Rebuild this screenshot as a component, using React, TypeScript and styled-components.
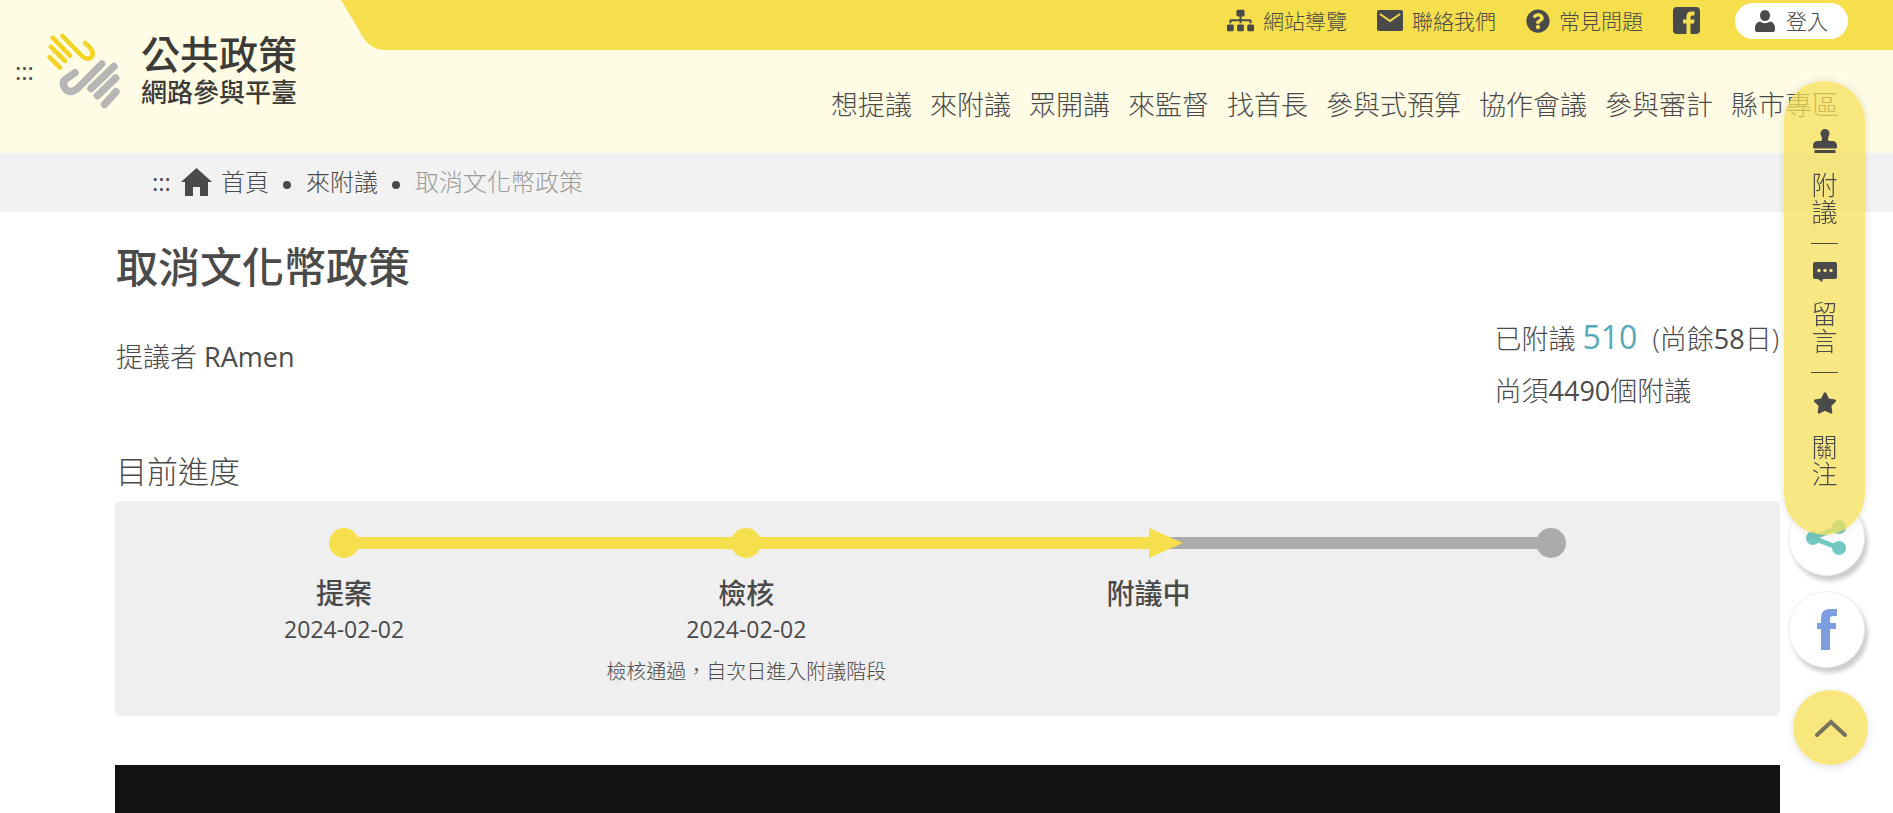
import React from "react";
import styled, { createGlobalStyle } from "styled-components";
import { FaQuestionCircle, FaSitemap, FaStamp, FaStar } from "react-icons/fa";

const GlobalStyle = createGlobalStyle`
  *, *::before, *::after { box-sizing: border-box; }
  body {
    margin: 0;
    background: #ffffff;
    color: #4a4a4a;
    font-family: "Open Sans", "Noto Sans CJK TC", sans-serif;
    font-weight: 300;
  }
  a { color: inherit; text-decoration: none; }
  h1, h2, p, ul, ol { margin: 0; padding: 0; list-style: none; }
`;

const Page = styled.div`
  display: flex;
  flex-direction: column;
  min-height: 100vh;
`;

const Header = styled.header`
  display: flex;
  height: 153px;
  background: #fffce6;
`;

const Brand = styled.div`
  display: flex;
  align-items: flex-start;
  flex: none;
  width: 341px;
  padding: 32px 0 0 15px;
`;

const AccessKey = styled.a`
  flex: none;
  font-size: 24px;
  line-height: 32px;
  font-weight: 400;
`;

const BrandKey = styled(AccessKey)`
  margin: 23px 13px 0 0;
`;

const BrandLink = styled.a`
  display: flex;
  gap: 20px;
  color: #3c3b37;
`;

const BrandText = styled.span`
  display: flex;
  flex-direction: column;
  padding-top: 1px;
  font-family: "Liberation Sans", "Noto Sans CJK TC", sans-serif;
  font-weight: 500;
`;

const BrandMain = styled.span`
  font-size: 39px;
  line-height: 45px;
`;

const BrandSub = styled.span`
  font-size: 26px;
  line-height: 30px;
`;

const HeaderMain = styled.div`
  display: flex;
  flex-direction: column;
  flex: 1;
  min-width: 0;
`;

const TopBar = styled.div`
  display: flex;
  height: 50px;
`;

const Wedge = styled.svg`
  flex: none;
  width: 44px;
  height: 50px;
`;

const TopLinks = styled.nav`
  display: flex;
  flex: 1;
  align-items: flex-start;
  justify-content: flex-end;
  padding: 3px 45px 0 0;
  background: #f5df4d;
`;

const TopLink = styled.a`
  display: flex;
  align-items: center;
  gap: 9px;
  height: 35px;
  margin-right: 30px;
  font-size: 21px;
  line-height: 34px;
  white-space: nowrap;
`;

const LoginButton = styled.button`
  display: flex;
  align-items: center;
  justify-content: center;
  gap: 11px;
  width: 113px;
  height: 36px;
  margin-left: 5px;
  padding: 0;
  border: 0;
  border-radius: 18px;
  background: #ffffff;
  color: inherit;
  font: inherit;
  font-size: 21px;
  line-height: 36px;
`;

const MainNav = styled.nav`
  display: flex;
  justify-content: flex-end;
  gap: 18px;
  padding: 35px 54px 0 0;
  font-size: 27px;
  line-height: 40px;
  white-space: nowrap;
`;

const Breadcrumb = styled.nav`
  display: flex;
  align-items: center;
  height: 59px;
  padding: 0 0 2px 152px;
  background: #f2f2f2;
  font-size: 24px;
  line-height: 36px;
`;

const HomeIcon = styled.svg`
  margin: 0 9px 0 10px;
`;

const Bullet = styled.span`
  width: 8px;
  height: 8px;
  margin: 6px 15px 0 14px;
  border-radius: 50%;
  background: #4a4a4a;
`;

const Current = styled.span`
  color: #9b9b9b;
`;

const Main = styled.main`
  display: flex;
  flex-direction: column;
  flex: 1;
  padding: 0 113px 0 115px;
`;

const Title = styled.h1`
  padding: 27px 0 0 1px;
  font-size: 42px;
  line-height: 56px;
  font-weight: 500;
`;

const Meta = styled.div`
  display: flex;
  align-items: flex-start;
  justify-content: space-between;
  padding: 16px 1px 0;
  font-size: 27px;
  line-height: 52px;
`;

const Proposer = styled.p`
  padding-top: 20px;
`;

const Count = styled.strong`
  margin: 0 8px 0 0;
  color: #56a9b8;
  font-size: 32px;
  font-weight: 400;
`;

const Latin = styled.span`
  font-weight: 400;
`;

const SectionTitle = styled.h2`
  padding: 31px 0 0 1px;
  font-size: 31px;
  line-height: 46px;
  font-weight: 300;
`;

const Progress = styled.ol`
  display: grid;
  grid-template-columns: repeat(4, 1fr);
  min-height: 215px;
  margin-top: 7px;
  padding: 27px 28px;
  border-radius: 6px;
  background: #efefef;
  text-align: center;
`;

const Step = styled.li`
  min-width: 0;
`;

const Track = styled.div`
  display: grid;
  grid-template-columns: 1fr 1fr;
  align-items: center;
  height: 30px;
`;

const Line = styled.span<{ $side: 1 | 2; $tone: string }>`
  grid-area: 1 / ${(p) => p.$side};
  height: 12px;
  background: ${(p) => p.$tone};
`;

const Dot = styled.span<{ $tone: string }>`
  grid-area: 1 / 1 / 2 / 3;
  justify-self: center;
  width: 30px;
  height: 30px;
  border-radius: 50%;
  background: ${(p) => p.$tone};
`;

const Arrow = styled.svg`
  grid-area: 1 / 2;
  width: 34px;
  height: 30px;
`;

const StepName = styled.p`
  padding-top: 16px;
  font-size: 28px;
  line-height: 39px;
  font-weight: 500;
`;

const StepDate = styled.p`
  font-size: 23px;
  line-height: 32px;
  font-weight: 400;
`;

const StepNote = styled.p`
  padding-top: 11px;
  font-size: 20px;
  line-height: 32px;
`;

const Media = styled.section`
  flex: 1;
  min-height: 48px;
  margin-top: 49px;
  background: #121212;
`;

const ActionPill = styled.aside`
  position: fixed;
  top: 81px;
  right: 28px;
  z-index: 2;
  display: flex;
  flex-direction: column;
  align-items: center;
  width: 81px;
  padding: 48px 0 30px;
  border-radius: 41px;
  background: rgba(245, 224, 90, 0.75);
  box-shadow: 0 0 8px rgba(0, 0, 0, 0.12);
`;

const Action = styled.button`
  display: flex;
  flex-direction: column;
  align-items: center;
  gap: 19px;
  width: 27px;
  padding: 0 0 17px;
  border: 0;
  background: none;
  color: inherit;
  font: inherit;
  font-size: 26px;
  line-height: 27px;

  & + & {
    padding-top: 18px;
    border-top: 1px solid #4a4a4a;
  }
`;

const ActionLabel = styled.span`
  width: 27px;
  word-break: break-all;
`;

const ShareStack = styled.div`
  position: fixed;
  right: 28px;
  bottom: 145px;
  z-index: 1;
  display: flex;
  flex-direction: column;
  gap: 15px;
`;

const Round = styled.a`
  display: flex;
  align-items: center;
  justify-content: center;
  width: 77px;
  height: 77px;
  border: 1px solid #ececec;
  border-radius: 50%;
  background: #ffffff;
  box-shadow: 3px 5px 4px rgba(0, 0, 0, 0.2);
`;

const TopButton = styled.button`
  position: fixed;
  right: 25px;
  bottom: 48px;
  display: flex;
  align-items: center;
  justify-content: center;
  width: 75px;
  height: 75px;
  padding: 0;
  border: 0;
  border-radius: 50%;
  background: #f8e77c;
  box-shadow: 0 2px 8px rgba(0, 0, 0, 0.12);
`;

const YELLOW = "#f5df4d";
const GREY = "#ababab";

const NAV = ["想提議", "來附議", "眾開講", "來監督", "找首長", "參與式預算", "協作會議", "參與審計", "縣市專區"];

const Logo = () => (
  <svg width="74" height="78" viewBox="47 32 74 78" fill="none" strokeLinecap="round" aria-hidden="true">
    <g stroke="#f3d324" strokeWidth="4.600">
      <path d="M62.500 36 L81 55 Q87 61 91.500 57 Q96 52 85 43" />
      <path d="M52.700 37.700 L70 55.700" />
      <path d="M50.700 46.700 L65 61" />
      <path d="M49.600 57.300 L60 67.700" />
    </g>
    <g stroke="#b7b5b6" strokeWidth="7.400">
      <path d="M101.700 64 L79 87 Q71 95 65.500 89 Q61 83 66 79 L75 72.700" />
      <path d="M114 66.500 L91 88.500" />
      <path d="M115.700 78 L97.500 95.700" />
      <path d="M116 91.700 L104.500 104.500" />
    </g>
  </svg>
);

const MailIcon = () => (
  <svg width="26" height="21" viewBox="0 0 26 21" aria-hidden="true">
    <rect width="26" height="21" rx="2" fill="#4a4a4a" />
    <path d="M3 4 L13 11 L23 4" fill="none" stroke={YELLOW} strokeWidth="2" />
  </svg>
);

const FacebookSquare = () => (
  <svg width="27" height="27" viewBox="0 0 27 27" aria-hidden="true">
    <rect width="27" height="27" rx="4" fill="#4a4a4a" />
    <path d="M13.500 27 V16.500 H10 V12.500 H13.500 V9.500 Q13.500 4.500 18.500 4.500 H21.500 V8.500 H19.500 Q17.500 8.500 17.500 10.500 V12.500 H21.500 L21 16.500 H17.500 V27 Z" fill={YELLOW} />
  </svg>
);

const UserIcon = () => (
  <svg width="20" height="22" viewBox="0 0 20 22" fill="#4a4a4a" aria-hidden="true">
    <ellipse cx="10" cy="5.500" rx="5" ry="5.500" />
    <path d="M5 11.500 Q10 15 15 11.500 Q20 12.500 20 18 V20 Q20 22 18 22 H2 Q0 22 0 20 V18 Q0 12.500 5 11.500 Z" />
  </svg>
);

const CommentIcon = () => (
  <svg width="24" height="20" viewBox="0 0 24 20" aria-hidden="true">
    <path d="M2 0 H22 Q24 0 24 2 V15 Q24 17 22 17 H10 L9 20 L5 17 H2 Q0 17 0 15 V2 Q0 0 2 0 Z" fill="#4a4a4a" />
    <g fill="#f7e688">
      <circle cx="6" cy="8.500" r="1.700" />
      <circle cx="12" cy="8.500" r="1.700" />
      <circle cx="18" cy="8.500" r="1.700" />
    </g>
  </svg>
);

export default function App() {
  return (
    <>
      <GlobalStyle />
      <Page>
        <Header>
          <Brand>
            <BrandKey href="#top">:::</BrandKey>
            <BrandLink href="#home">
              <Logo />
              <BrandText>
                <BrandMain>公共政策</BrandMain>
                <BrandSub>網路參與平臺</BrandSub>
              </BrandText>
            </BrandLink>
          </Brand>
          <HeaderMain>
            <TopBar>
              <Wedge viewBox="0 0 44 50" aria-hidden="true">
                <path d="M0 0 H44 V50 Q27 50 18 30 Z" fill={YELLOW} />
              </Wedge>
              <TopLinks>
                <TopLink href="#sitemap"><FaSitemap size={27} />網站導覽</TopLink>
                <TopLink href="#contact"><MailIcon />聯絡我們</TopLink>
                <TopLink href="#faq"><FaQuestionCircle size={24} />常見問題</TopLink>
                <TopLink href="#facebook" aria-label="Facebook"><FacebookSquare /></TopLink>
                <LoginButton type="button"><UserIcon />登入</LoginButton>
              </TopLinks>
            </TopBar>
            <MainNav>
              {NAV.map((label) => <a key={label} href="#nav">{label}</a>)}
            </MainNav>
          </HeaderMain>
        </Header>

        <Breadcrumb>
          <AccessKey href="#content">:::</AccessKey>
          <HomeIcon width="31" height="28" viewBox="0 0 31 28" aria-hidden="true">
            <path d="M15.500 0 L31 14 H27 V28 H19 V19 H12 V28 H4 V14 H0 Z" fill="#4a4a4a" />
          </HomeIcon>
          <a href="#home">首頁</a>
          <Bullet />
          <a href="#endorse">來附議</a>
          <Bullet />
          <Current>取消文化幣政策</Current>
        </Breadcrumb>

        <Main>
          <Title>取消文化幣政策</Title>
          <Meta>
            <Proposer>提議者 <Latin>RAmen</Latin></Proposer>
            <div>
              <p>已附議 <Count>510</Count> (尚餘<Latin>58</Latin>日)</p>
              <p>尚須<Latin>4490</Latin>個附議</p>
            </div>
          </Meta>
          <SectionTitle>目前進度</SectionTitle>
          <Progress>
            <Step>
              <Track><Line $side={2} $tone={YELLOW} /><Dot $tone={YELLOW} /></Track>
              <StepName>提案</StepName>
              <StepDate>2024-02-02</StepDate>
            </Step>
            <Step>
              <Track><Line $side={1} $tone={YELLOW} /><Line $side={2} $tone={YELLOW} /><Dot $tone={YELLOW} /></Track>
              <StepName>檢核</StepName>
              <StepDate>2024-02-02</StepDate>
              <StepNote>檢核通過，自次日進入附議階段</StepNote>
            </Step>
            <Step>
              <Track>
                <Line $side={1} $tone={YELLOW} />
                <Line $side={2} $tone={GREY} />
                <Arrow viewBox="0 0 34 30" aria-hidden="true"><path d="M0 0 L34 15 L0 30 Z" fill={YELLOW} /></Arrow>
              </Track>
              <StepName>附議中</StepName>
            </Step>
            <Step>
              <Track><Line $side={1} $tone={GREY} /><Dot $tone={GREY} /></Track>
            </Step>
          </Progress>
          <Media />
        </Main>
      </Page>

      <ActionPill>
        <Action type="button"><FaStamp size={24} /><ActionLabel>附議</ActionLabel></Action>
        <Action type="button"><CommentIcon /><ActionLabel>留言</ActionLabel></Action>
        <Action type="button"><FaStar size={24} /><ActionLabel>關注</ActionLabel></Action>
      </ActionPill>

      <ShareStack>
        <Round href="#share" aria-label="分享">
          <svg width="42" height="36" viewBox="0 0 42 36" aria-hidden="true">
            <path d="M33 7 L7 18 L33 28" fill="none" stroke="#72c9c1" strokeWidth="5" />
            <g fill="#72c9c1">
              <circle cx="33" cy="7" r="7" /><circle cx="7" cy="18" r="7" /><circle cx="33" cy="28" r="7" />
            </g>
          </svg>
        </Round>
        <Round href="#facebook-share" aria-label="Facebook 分享">
          <svg width="20" height="41" viewBox="0 0 20 41" aria-hidden="true">
            <path d="M4 41 V20 H0 V14 H4 V9 Q4 0 13 0 H20 V7 H16 Q13 7 13 10 V14 H19 V20 H13 V41 Z" fill="#7d9fdf" />
          </svg>
        </Round>
      </ShareStack>

      <TopButton type="button" aria-label="回頂端">
        <svg width="32" height="18" viewBox="0 0 32 18" aria-hidden="true">
          <path d="M2 16 L16 3 L30 16" fill="none" stroke="#77725a" strokeWidth="4" strokeLinecap="round" />
        </svg>
      </TopButton>
    </>
  );
}
